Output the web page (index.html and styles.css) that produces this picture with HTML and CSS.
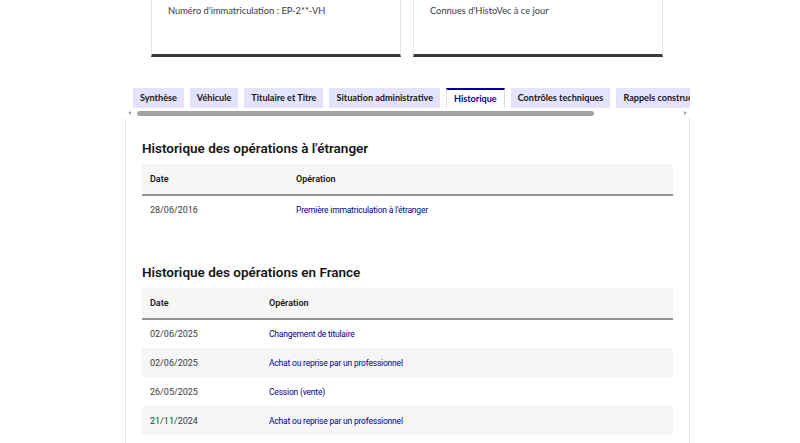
FILE: index.html
```html
<!DOCTYPE html>
<html lang="fr">
<head>
    <meta charset="UTF-8">
    <title>HistoVec - Historique</title>
    <link rel="stylesheet" href="styles.css">
</head>
<body>
    <div class="cards">
        <div class="card">Numéro d'immatriculation : EP-2**-VH</div>
        <div class="card">Connues d'HistoVec à ce jour</div>
    </div>

    <div class="tabs-wrap">
        <div class="tabs">
            <div class="tab">Synthèse</div>
            <div class="tab">Véhicule</div>
            <div class="tab">Titulaire et Titre</div>
            <div class="tab">Situation administrative</div>
            <div class="tab active">Historique</div>
            <div class="tab">Contrôles techniques</div>
            <div class="tab">Rappels constructeur</div>
        </div>
        <div class="scrollbar">
            <span class="arrow left"></span>
            <span class="thumb"></span>
            <span class="arrow right"></span>
        </div>

        <div class="panel">
            <h2>Historique des opérations à l'étranger</h2>
            <table class="ops">
                <thead>
                    <tr><th class="col-date1">Date</th><th>Opération</th></tr>
                </thead>
                <tbody>
                    <tr><td>28/06/2016</td><td><a href="#">Première immatriculation à l'étranger</a></td></tr>
                </tbody>
            </table>

            <h2 class="second">Historique des opérations en France</h2>
            <table class="ops striped">
                <thead>
                    <tr><th class="col-date2">Date</th><th>Opération</th></tr>
                </thead>
                <tbody>
                    <tr><td>02/06/2025</td><td><a href="#">Changement de titulaire</a></td></tr>
                    <tr><td>02/06/2025</td><td><a href="#">Achat ou reprise par un professionnel</a></td></tr>
                    <tr><td>26/05/2025</td><td><a href="#">Cession (vente)</a></td></tr>
                    <tr><td>21/11/2024</td><td><a href="#">Achat ou reprise par un professionnel</a></td></tr>
                </tbody>
            </table>
        </div>
    </div>
</body>
</html>
```

FILE: styles.css
```css
* {
    box-sizing: border-box;
}
body {
    margin: 0;
    background: #ffffff;
    color: #161616;
    font-family: Roboto, "Noto Sans", Arial, sans-serif;
    overflow: hidden;
}
.cards {
    display: flex;
    gap: 12px;
    padding-left: 151px;
}
.card {
    width: 250px;
    height: 57px;
    padding: 5px 8px 0 16px;
    border: 1px solid #e5e5e5;
    border-top: none;
    border-bottom: 3px solid #3a3a3a;
    font-family: Lato, "Noto Sans", sans-serif;
    font-size: 9.3px;
    color: #3a3a3a;
}
.tabs-wrap {
    width: 565px;
    margin: 31px 0 0 125px;
}
.tabs {
    display: flex;
    gap: 6px;
    padding-left: 8px;
    overflow: hidden;
    white-space: nowrap;
}
.tab {
    flex: none;
    height: 20px;
    line-height: 20px;
    padding: 0 7px;
    background: #e3e3fd;
    font-family: Lato, "Noto Sans", sans-serif;
    font-size: 9.1px;
    font-weight: bold;
    color: #161616;
}
.tab.active {
    background: #ffffff;
    color: #000091;
    border-top: 2px solid #000091;
    border-left: 1px solid #dddddd;
    border-right: 1px solid #dddddd;
    line-height: 18px;
}
.scrollbar {
    display: flex;
    align-items: center;
    height: 10px;
    padding: 0 3px;
}
.arrow {
    width: 0;
    height: 0;
    border-top: 2.5px solid transparent;
    border-bottom: 2.5px solid transparent;
}
.arrow.left {
    border-right: 3px solid #a3a3a3;
}
.arrow.right {
    border-left: 3px solid #a3a3a3;
    margin-left: auto;
}
.thumb {
    width: 457px;
    height: 5px;
    margin-left: 6px;
    border-radius: 3px;
    background: #a3a3a3;
}
.panel {
    border-left: 1px solid #e5e5e5;
    border-right: 1px solid #e5e5e5;
    padding: 12px 16px 0 16px;
    height: 400px;
}
h2 {
    margin: 9px 0 7px 0;
    font-size: 13.5px;
    font-weight: 600;
    line-height: 18px;
}
h2.second {
    margin-top: 39px;
}
.ops {
    width: 531px;
    border-collapse: collapse;
    font-size: 9px;
}
.ops th {
    height: 31px;
    padding: 0 8px;
    background: #f6f6f6;
    border-bottom: 2px solid #929292;
    text-align: left;
    font-weight: 600;
}
.col-date1 {
    width: 146px;
}
.col-date2 {
    width: 119px;
}
.ops td {
    height: 29px;
    padding: 0 8px;
    color: #3a3a3a;
}
.ops a {
    color: #000091;
    text-decoration: none;
    font-size: 8.5px;
    letter-spacing: -0.2px;
}
.striped tbody tr:nth-child(even) td {
    background: #f6f6f6;
}
```
